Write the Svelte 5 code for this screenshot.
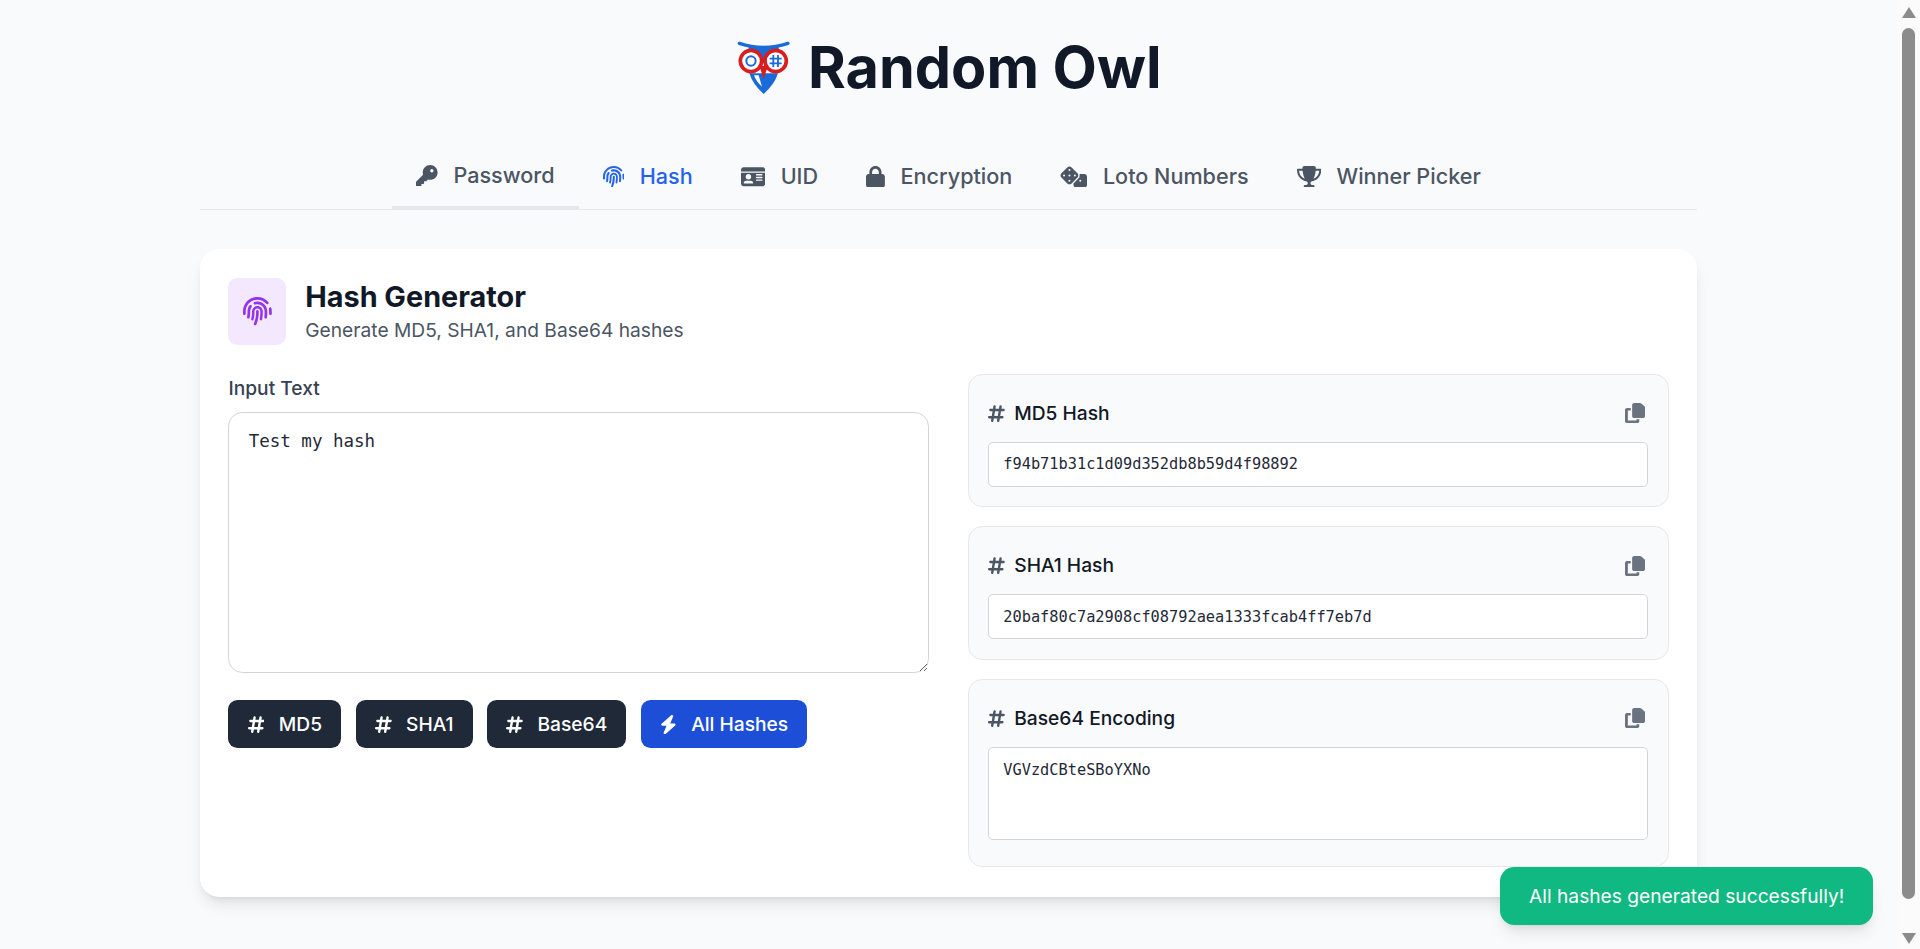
<script lang="ts">
  interface Tab {
    label: string;
    vb: string;
    d: string;
    active?: boolean;
    hover?: boolean;
  }

  const icons = {
    key: 'M336 352c97.2 0 176-78.8 176-176S433.2 0 336 0S160 78.8 160 176c0 18.7 2.9 36.8 8.3 53.7L7 391c-4.5 4.5-7 10.6-7 17v80c0 13.3 10.7 24 24 24h80c13.3 0 24-10.7 24-24V448h40c13.3 0 24-10.7 24-24V384h40c6.4 0 12.5-2.5 17-7l33.3-33.3c16.9 5.4 35 8.3 53.7 8.3zM376 96a40 40 0 1 1 0 80 40 40 0 1 1 0-80z',
    fingerprint: 'M48 256C48 141.1 141.1 48 256 48c63.1 0 119.6 28.1 157.8 72.5c8.6 10.1 23.8 11.2 33.8 2.6s11.2-23.8 2.6-33.8C403.3 34.6 333.7 0 256 0C114.6 0 0 114.6 0 256v40c0 13.3 10.7 24 24 24s24-10.7 24-24V256zm458.5-52.9c-2.7-13-15.5-21.3-28.4-18.5s-21.3 15.5-18.5 28.4c2.9 13.9 4.5 28.3 4.5 43.1v40c0 13.3 10.7 24 24 24s24-10.7 24-24V256c0-18.1-1.9-35.8-5.5-52.9zM256 80c-19 0-37.4 3-54.5 8.6c-15.2 5-18.7 23.7-8.3 35.9c7.1 8.3 18.8 10.8 29.4 7.9c10.6-2.9 21.8-4.4 33.4-4.4c70.7 0 128 57.3 128 128v24.9c0 25.2-1.5 50.3-4.4 75.3c-1.7 14.6 9.4 27.8 24.2 27.8c11.8 0 21.9-8.6 23.3-20.3c3.3-27.4 5-55 5-82.7V256c0-97.2-78.8-176-176-176zM150.7 148.7c-9.1-10.6-25.3-11.4-33.9-.4C93.7 178 80 215.4 80 256v24.9c0 24.2-2.6 48.4-7.8 71.9C68.8 368.4 80.1 384 96.1 384c10.5 0 19.9-7 22.2-17.3c6.4-28.1 9.7-56.8 9.7-85.8V256c0-27.2 8.5-52.4 22.9-73.1c7.2-10.4 8-24.6-.2-34.2zM256 160c-53 0-96 43-96 96v24.9c0 35.9-4.6 71.5-13.8 106.1c-3.8 14.3 6.7 29 21.5 29c9.5 0 17.9-6.2 20.4-15.4c10.5-39 15.9-79.2 15.9-119.7V256c0-28.7 23.3-52 52-52s52 23.3 52 52v24.9c0 36.3-3.5 72.4-10.4 107.9c-2.7 13.9 7.7 27.2 21.8 27.2c10.2 0 19-7 21-17c7.7-38.8 11.6-78.3 11.6-118.1V256c0-53-43-96-96-96zm24 96c0-13.3-10.7-24-24-24s-24 10.7-24 24v24.9c0 59.9-11 119.3-32.5 175.2l-5.9 15.3c-4.8 12.4 1.4 26.3 13.8 31s26.3-1.4 31-13.8l5.9-15.3C267.9 411.9 280 346.7 280 280.9V256z',
    idCard: 'M64 32C28.7 32 0 60.7 0 96v32H576V96c0-35.3-28.7-64-64-64H64zM576 160H0V416c0 35.3 28.7 64 64 64H512c35.3 0 64-28.7 64-64V160zM64 405.3c0-29.5 23.9-53.3 53.3-53.3h117.3c29.5 0 53.3 23.9 53.3 53.3c0 5.9-4.8 10.7-10.7 10.7H74.7c-5.9 0-10.7-4.8-10.7-10.7zM176 192a64 64 0 1 1 0 128 64 64 0 1 1 0-128zm176 16c0-8.8 7.2-16 16-16H496c8.8 0 16 7.2 16 16s-7.2 16-16 16H368c-8.8 0-16-7.2-16-16zm0 64c0-8.8 7.2-16 16-16H496c8.8 0 16 7.2 16 16s-7.2 16-16 16H368c-8.8 0-16-7.2-16-16zm0 64c0-8.8 7.2-16 16-16H496c8.8 0 16 7.2 16 16s-7.2 16-16 16H368c-8.8 0-16-7.2-16-16z',
    lock: 'M144 144v48H304V144c0-44.2-35.8-80-80-80s-80 35.8-80 80zM80 192V144C80 64.5 144.5 0 224 0s144 64.5 144 144v48h16c35.3 0 64 28.7 64 64V448c0 35.3-28.7 64-64 64H64c-35.3 0-64-28.7-64-64V256c0-35.3 28.7-64 64-64H80z',
    dice: 'M274.9 34.3c-28.1-28.1-73.7-28.1-101.8 0L34.3 173.1c-28.1 28.1-28.1 73.7 0 101.8L173.1 413.7c28.1 28.1 73.7 28.1 101.8 0L413.7 274.9c28.1-28.1 28.1-73.7 0-101.8L274.9 34.3zM200 224a24 24 0 1 1 48 0 24 24 0 1 1 -48 0zM96 200a24 24 0 1 1 0 48 24 24 0 1 1 0-48zM224 376a24 24 0 1 1 0-48 24 24 0 1 1 0 48zM352 200a24 24 0 1 1 0 48 24 24 0 1 1 0-48zM224 120a24 24 0 1 1 0-48 24 24 0 1 1 0 48zm96 328c0 35.3 28.7 64 64 64H576c35.3 0 64-28.7 64-64V256c0-35.3-28.7-64-64-64H461.7c11.6 36 3.1 77-25.4 105.5L320 413.8V448zM480 328a24 24 0 1 1 0 48 24 24 0 1 1 0-48z',
    trophy: 'M400 0H176c-26.5 0-48.1 21.8-47.1 48.2c.2 5.3 .4 10.6 .7 15.8H24C10.7 64 0 74.7 0 88c0 92.6 33.5 157 78.5 200.7c44.3 43.1 98.3 64.8 138.1 75.8c23.4 6.5 39.4 26 39.4 45.6c0 20.9-17 37.9-37.9 37.9H192c-17.7 0-32 14.3-32 32s14.3 32 32 32H384c17.7 0 32-14.3 32-32s-14.3-32-32-32H357.9C337 448 320 431 320 410.1c0-19.6 15.9-39.2 39.4-45.6c39.9-11 93.9-32.7 138.2-75.8C542.5 245 576 180.6 576 88c0-13.3-10.7-24-24-24H446.4c.3-5.2 .5-10.4 .7-15.8C448.1 21.8 426.5 0 400 0zM48.9 112h84.4c9.1 90.1 29.2 150.3 51.9 190.6c-24.9-11-50.8-26.5-73.2-48.3c-32-31.1-58-76-63-142.3zM464.1 254.3c-22.4 21.8-48.3 37.3-73.2 48.3c22.7-40.3 42.8-100.5 51.9-190.6h84.4c-5.1 66.3-31.1 111.2-63 142.3z',
    hashtag: 'M181.3 32.4c17.4 2.9 29.2 19.4 26.3 36.8L197.8 128h95.1l11.5-69.3c2.9-17.4 19.4-29.2 36.8-26.3s29.2 19.4 26.3 36.8L357.8 128H416c17.7 0 32 14.3 32 32s-14.3 32-32 32H347.1L325.8 320H384c17.7 0 32 14.3 32 32s-14.3 32-32 32H315.1l-11.5 69.3c-2.9 17.4-19.4 29.2-36.8 26.3s-29.2-19.4-26.3-36.8l9.8-58.7H155.1l-11.5 69.3c-2.9 17.4-19.4 29.2-36.8 26.3s-29.2-19.4-26.3-36.8L90.2 384H32c-17.7 0-32-14.3-32-32s14.3-32 32-32h68.9l21.3-128H64c-17.7 0-32-14.3-32-32s14.3-32 32-32h68.9l11.5-69.3c2.9-17.4 19.4-29.2 36.8-26.3zM187.1 192L165.8 320h95.1l21.3-128H187.1z',
    bolt: 'M349.4 44.6c5.9-13.7 1.5-29.7-10.6-38.5s-28.6-8-39.9 1.8l-256 224c-10 8.8-13.6 22.9-8.9 35.3S50.7 288 64 288H175.5L98.6 467.4c-5.9 13.7-1.5 29.7 10.6 38.5s28.6 8 39.9-1.8l256-224c10-8.8 13.6-22.9 8.9-35.3s-16.6-20.7-30-20.7H272.5L349.4 44.6z',
    copy: 'M208 0H332.1c12.7 0 24.9 5.1 33.9 14.1l67.9 67.9c9 9 14.1 21.2 14.1 33.9V336c0 26.5-21.5 48-48 48H208c-26.5 0-48-21.5-48-48V48c0-26.5 21.5-48 48-48zM48 128h80v64H64V448H256V416h64v48c0 26.5-21.5 48-48 48H48c-26.5 0-48-21.5-48-48V176c0-26.5 21.5-48 48-48z',
  };

  const tabs: Tab[] = [
    { label: 'Password', vb: '0 0 512 512', d: icons.key, hover: true },
    { label: 'Hash', vb: '0 0 512 512', d: icons.fingerprint, active: true },
    { label: 'UID', vb: '0 0 576 512', d: icons.idCard },
    { label: 'Encryption', vb: '0 0 448 512', d: icons.lock },
    { label: 'Loto Numbers', vb: '0 0 640 512', d: icons.dice },
    { label: 'Winner Picker', vb: '0 0 576 512', d: icons.trophy },
  ];

  const actions = ['MD5', 'SHA1', 'Base64'];

  const results = [
    { title: 'MD5 Hash', value: 'f94b71b31c1d09d352db8b59d4f98892' },
    { title: 'SHA1 Hash', value: '20baf80c7a2908cf08792aea1333fcab4ff7eb7d' },
  ];
</script>

{#snippet fa(vb: string, d: string)}
  <svg class="fa" viewBox={vb} aria-hidden="true"><path fill="currentColor" {d} /></svg>
{/snippet}

{#snippet copyButton()}
  <button class="copy" aria-label="Copy">
    <svg class="copy-icon" viewBox="0 0 448 512" preserveAspectRatio="none" aria-hidden="true">
      <path fill="currentColor" d={icons.copy} />
    </svg>
  </button>
{/snippet}

<div class="page">
  <div class="container">
    <header class="brand">
      <svg class="logo" viewBox="19 6 160 174" aria-hidden="true">
        <path d="M62 112 Q72 145 105 174 Q138 145 148 112 Z" fill="#1a6ad8" />
        <path d="M60 30 H150 V80 H60 Z" fill="#1a6ad8" />
        <path d="M76 118 Q82 136 100 152 Q94 132 90 118 Z" fill="#fff" />
        <path d="M32 22 Q105 46 178 22" fill="none" stroke="#1a6ad8" stroke-width="10" stroke-linecap="round" />
        <circle cx="67" cy="75" r="32" fill="#fff" stroke="#d81e1e" stroke-width="11" />
        <circle cx="141" cy="75" r="32" fill="#fff" stroke="#d81e1e" stroke-width="11" />
        <path d="M92 90 L118 90 L105 128 Z" fill="#d81e1e" />
        <circle cx="67" cy="75" r="14" fill="none" stroke="#1a6ad8" stroke-width="6" />
        <path d="M134 57 V93 M148 57 V93 M123 68 H159 M123 82 H159" fill="none" stroke="#1a6ad8" stroke-width="5.5" />
      </svg>
      <h1>Random Owl</h1>
    </header>

    <nav class="tabs">
      {#each tabs as tab}
        <button class="tab" class:active={tab.active} class:hover={tab.hover}>
          {@render fa(tab.vb, tab.d)}
          <span>{tab.label}</span>
        </button>
      {/each}
    </nav>

    <main class="card">
      <div class="card-head">
        <div class="head-icon">{@render fa('0 0 512 512', icons.fingerprint)}</div>
        <div>
          <h2>Hash Generator</h2>
          <p>Generate MD5, SHA1, and Base64 hashes</p>
        </div>
      </div>

      <div class="columns">
        <div>
          <label class="field-label" for="input">Input Text</label>
          <textarea id="input" class="input-text">Test my hash</textarea>
          <div class="actions">
            {#each actions as action}
              <button class="btn">{@render fa('0 0 448 512', icons.hashtag)}{action}</button>
            {/each}
            <button class="btn primary">{@render fa('0 0 448 512', icons.bolt)}All Hashes</button>
          </div>
        </div>

        <div class="results">
          {#each results as result}
            <section class="panel">
              <div class="panel-head">
                <h3>{@render fa('0 0 448 512', icons.hashtag)}{result.title}</h3>
                {@render copyButton()}
              </div>
              <input class="output" readonly value={result.value} />
            </section>
          {/each}
          <section class="panel">
            <div class="panel-head">
              <h3>{@render fa('0 0 448 512', icons.hashtag)}Base64 Encoding</h3>
              {@render copyButton()}
            </div>
            <textarea class="output tall" readonly>VGVzdCBteSBoYXNo</textarea>
          </section>
        </div>
      </div>
    </main>
  </div>

  <div class="toast">All hashes generated successfully!</div>
</div>

<div class="scrollbar" aria-hidden="true">
  <span class="arrow up"></span>
  <span class="thumb"></span>
  <span class="arrow down"></span>
</div>

<style>
  :global(html) {
    font-size: 19.2px;
  }

  :global(body) {
    overflow: hidden;
    background: #f9fafb;
  }

  .page {
    position: relative;
    width: calc(100vw - 23px);
    height: 100vh;
    font-family: Inter, "Liberation Sans", sans-serif;
    color: #111827;
    line-height: 1.5;
  }

  .container {
    max-width: 80rem;
    margin: 0 auto;
    padding: 2rem 1rem;
    box-sizing: border-box;
  }

  .fa {
    height: 1em;
    width: auto;
    flex: none;
    display: block;
  }

  .brand {
    display: flex;
    align-items: center;
    justify-content: center;
    gap: 1rem;
    margin-bottom: 63.8px;
  }

  .logo {
    width: 53.3px;
    height: 58px;
    flex: none;
    overflow: visible;
  }

  h1 {
    margin: 0;
    font-size: 3rem;
    line-height: 1;
    font-weight: 700;
  }

  .tabs {
    display: flex;
    justify-content: center;
    border-bottom: 1px solid #e5e7eb;
    margin-bottom: 39px;
  }

  .tab {
    display: flex;
    align-items: center;
    gap: 15.6px;
    padding: 0 1.25rem 0.75rem;
    margin-bottom: -1px;
    border: none;
    border-bottom: 3px solid transparent;
    background: none;
    font: inherit;
    font-size: 1.125rem;
    font-weight: 500;
    color: #4b5563;
  }

  .tab.active {
    color: #2563eb;
  }

  .tab.hover {
    border-bottom-color: #e5e7eb;
    transform: translateY(-1px);
  }

  .card {
    background: #fff;
    border-radius: 1rem;
    padding: 1.5rem 1.5rem 29.8px;
    box-shadow: 0 10px 15px -3px rgb(0 0 0 / 0.1), 0 4px 6px -4px rgb(0 0 0 / 0.1);
  }

  .card-head {
    display: flex;
    gap: 1rem;
    margin-bottom: 1.5rem;
  }

  .head-icon {
    width: 3rem;
    display: flex;
    align-items: center;
    justify-content: center;
    background: #f3e8ff;
    border-radius: 0.5rem;
    color: #9333ea;
    font-size: 1.5rem;
  }

  h2 {
    margin: 0;
    font-size: 1.5rem;
    line-height: 2rem;
    font-weight: 700;
  }

  .card-head p {
    margin: 0;
    font-size: 1rem;
    color: #4b5563;
  }

  .columns {
    display: grid;
    grid-template-columns: 1fr 1fr;
    gap: 2rem;
  }

  .field-label {
    display: block;
    font-size: 1rem;
    line-height: 1.5rem;
    font-weight: 500;
    color: #374151;
    margin-bottom: 0.5rem;
  }

  .input-text {
    display: block;
    width: 100%;
    height: 261px;
    box-sizing: border-box;
    padding: 14.6px 1rem 1rem;
    border: 1px solid #d1d5db;
    border-radius: 0.75rem;
    background: #fff;
    color: #1f2937;
    font-family: "DejaVu Sans Mono", monospace;
    font-size: 17.5px;
    line-height: 1.5;
    outline: none;
  }

  .actions {
    display: flex;
    gap: 0.75rem;
    margin-top: 27px;
  }

  .btn {
    display: flex;
    align-items: center;
    gap: 0.75rem;
    height: 48px;
    padding: 0 1rem;
    border: none;
    border-radius: 0.5rem;
    background: #1f2937;
    color: #fff;
    font: inherit;
    font-weight: 500;
    font-size: 1rem;
  }

  .btn.primary {
    background: #1d4ed8;
  }

  .results {
    display: flex;
    flex-direction: column;
    gap: 1rem;
  }

  .panel {
    padding: 1rem;
    background: #f9fafb;
    border: 1px solid #e5e7eb;
    border-radius: 0.75rem;
  }

  .panel-head {
    display: flex;
    align-items: center;
    justify-content: space-between;
    height: 2rem;
    margin-bottom: 0.5rem;
  }

  h3 {
    display: flex;
    align-items: center;
    gap: 0.5rem;
    margin: 0;
    font-size: 1rem;
    font-weight: 500;
    color: #111827;
  }

  h3 .fa {
    color: #4b5563;
  }

  .copy {
    display: block;
    padding: 0 3.5px 0 0;
    border: none;
    background: none;
    color: #6b7280;
  }

  .copy-icon {
    display: block;
    width: 20px;
    height: 20px;
  }

  .output {
    display: block;
    width: 100%;
    height: 45px;
    box-sizing: border-box;
    padding: 0 0.75rem;
    border: 1px solid #d1d5db;
    border-radius: 0.25rem;
    background: #fff;
    color: #1f2937;
    font-family: "DejaVu Sans Mono", monospace;
    font-size: 15.3px;
    outline: none;
  }

  .output.tall {
    height: 93px;
    padding: 13.4px 0.75rem 0;
    margin-bottom: 7px;
    resize: none;
  }

  .toast {
    position: absolute;
    right: 1.25rem;
    bottom: 1.25rem;
    padding: 0.75rem 1.5rem;
    background: #10b981;
    color: #fff;
    border-radius: 0.75rem;
    font-size: 1rem;
    font-weight: 400;
    box-shadow: 0 10px 15px -3px rgb(0 0 0 / 0.1), 0 4px 6px -4px rgb(0 0 0 / 0.1);
  }

  .scrollbar {
    position: fixed;
    top: 0;
    right: 0;
    bottom: 0;
    width: 23px;
    background: #fbfbfb;
  }

  .thumb {
    position: absolute;
    left: 5px;
    top: 28px;
    width: 13px;
    height: 871px;
    background: #8c8c8c;
    border-radius: 7px;
  }

  .arrow {
    position: absolute;
    left: 5px;
    width: 0;
    height: 0;
    border-left: 7px solid transparent;
    border-right: 7px solid transparent;
  }

  .arrow.up {
    top: 7px;
    border-bottom: 11px solid #8c8c8c;
  }

  .arrow.down {
    top: 933px;
    border-top: 11px solid #8c8c8c;
  }
</style>
